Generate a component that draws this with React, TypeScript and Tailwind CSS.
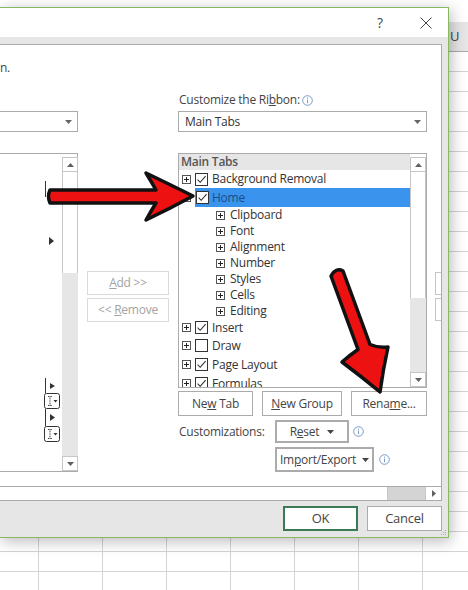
import React from "react";

const SUBS = ["Clipboard", "Font", "Alignment", "Number", "Styles", "Cells", "Editing"];
const COLS = ["w-[39px]", "w-[64px]", "w-[64px]", "w-[64px]", "w-[64px]", "w-[64px]", "w-[64px]", "w-[64px]"];

function Caret({ dir = "down", color = "#666" }: { dir?: "down" | "up" | "right"; color?: string }) {
  if (dir === "right")
    return (
      <svg width="4" height="7" viewBox="0 0 4 7">
        <path d="M0 0L4 3.5L0 7Z" fill={color} />
      </svg>
    );
  return (
    <svg width="7" height="4" viewBox="0 0 7 4">
      <path d={dir === "down" ? "M0 0H7L3.5 4Z" : "M0 4H7L3.5 0Z"} fill={color} />
    </svg>
  );
}

function Info() {
  return (
    <svg width="11" height="11" viewBox="0 0 11 11">
      <circle cx="5.5" cy="5.5" r="4.8" fill="none" stroke="#7b9bc4" strokeWidth="1" />
      <rect x="5" y="4.6" width="1" height="3.6" fill="#7b9bc4" />
      <rect x="5" y="2.6" width="1" height="1.1" fill="#7b9bc4" />
    </svg>
  );
}

function PlusBox({ minus }: { minus?: boolean }) {
  return (
    <svg width="9" height="9" viewBox="0 0 9 9" className="shrink-0">
      <rect x="0.5" y="0.5" width="8" height="8" fill="#fff" stroke="#555" />
      <path d="M2 4.5H7" stroke="#222" />
      {!minus && <path d="M4.5 2V7" stroke="#222" />}
    </svg>
  );
}

function CheckBox({ checked }: { checked: boolean }) {
  return (
    <svg width="13" height="13" viewBox="0 0 13 13" className="shrink-0">
      <rect x="0.5" y="0.5" width="12" height="12" fill="#fff" stroke="#333" />
      {checked && <path d="M2.6 6.6L5.2 9.3L10.6 3.2" fill="none" stroke="#333" strokeWidth="1.1" />}
    </svg>
  );
}

function VScroll({ thumb }: { thumb: string }) {
  return (
    <div className="w-[16px] shrink-0 flex flex-col pt-[3px]">
      <div className="h-[15px] shrink-0 border border-[#c6c6c6] bg-white flex items-center justify-center">
        <Caret dir="up" color="#606060" />
      </div>
      <div className={`${thumb} shrink-0 border-x border-[#c6c6c6] bg-white`} />
      <div className="flex-1 bg-[#e6e6e6]" />
      <div className="h-[15px] shrink-0 border border-[#c6c6c6] bg-white flex items-center justify-center">
        <Caret dir="down" color="#606060" />
      </div>
    </div>
  );
}

function TopRow({ h, label, checked = true }: { h: string; label: string; checked?: boolean }) {
  return (
    <div className={`${h} shrink-0 flex items-center pl-[3px] gap-[4px] whitespace-nowrap text-[#333]`}>
      <PlusBox />
      <CheckBox checked={checked} />
      <span>{label}</span>
    </div>
  );
}

function Sheet() {
  const rows = Array.from({ length: 27 });
  return (
    <div className="w-[468px]">
      <div className="h-[22px]" />
      <div className="h-[30px] flex bg-[#e6e6e6] border-b border-[#ababab]">
        {COLS.map((w, i) => (
          <div key={i} className={`${w} shrink-0 border-r border-[#c8c8c8] flex items-center justify-center text-[13px] text-[#444]`}>
            {i === 7 ? "U" : ""}
          </div>
        ))}
      </div>
      {rows.map((_, r) => (
        <div key={r} className="h-[20px] flex border-b border-[#d4d4d4]">
          {COLS.map((w, i) => (
            <div key={i} className={`${w} shrink-0 border-r border-[#d4d4d4]`} />
          ))}
        </div>
      ))}
    </div>
  );
}

function LeftColumn() {
  return (
    <div className="w-[78px] shrink-0 flex flex-col">
      <div className="h-[19px]" />
      <div className="h-[21px] border-y border-r border-[#ababab] flex items-center justify-end pr-[5px]">
        <Caret />
      </div>
      <div className="mt-[21px] h-[319px] border-y border-r border-[#ababab] flex">
        <div className="flex-1 flex flex-col">
          <div className="mt-[27px] ml-[45px] w-[1px] h-[16px] bg-[#333]" />
          <div className="mt-[40px] ml-[49px] leading-none">
            <svg width="5" height="8" viewBox="0 0 5 8">
              <path d="M0 0L5 4L0 8Z" fill="#333" />
            </svg>
          </div>
          <div className="mt-[132px] ml-[42px] leading-none">
            <svg width="20" height="66" viewBox="0 0 20 66">
              <path d="M3.5 1V16M3.5 32V49" stroke="#333" />
              <path d="M8 6L13 9L8 12Z" fill="#333" />
              <path d="M8 37L13 40.5L8 44Z" fill="#333" />
              {[16, 49].map((y) => (
                <g key={y}>
                  <rect x="2.5" y={y + 0.5} width="15" height="15" rx="2" fill="#fff" stroke="#333" />
                  <path d={`M6 ${y + 3.5}H10M8 ${y + 3.5}V${y + 12.5}M6 ${y + 12.5}H10`} stroke="#444" strokeDasharray="1 0.6" />
                  <path d={`M11.5 ${y + 7}H15.5L13.5 ${y + 9.5}Z`} fill="#333" />
                </g>
              ))}
            </svg>
          </div>
        </div>
        <VScroll thumb="h-[101px]" />
      </div>
    </div>
  );
}

function RightColumn() {
  return (
    <div className="ml-[9px] w-[249px] shrink-0 flex flex-col">
      <div className="h-[16px] flex items-center gap-[2px] pl-[1px] whitespace-nowrap">
        <span>
          Customize the Ri<span className="underline">b</span>bon:
        </span>
        <Info />
      </div>
      <div className="mt-[3px] h-[21px] border border-[#ababab] flex items-center justify-between pl-[6px] pr-[5px] text-[#333]">
        <span>Main Tabs</span>
        <Caret />
      </div>
      <div className="mt-[21px] h-[235px] border border-[#ababab] flex">
        <div className="flex-1 overflow-hidden flex flex-col">
          <div className="h-[16px] shrink-0 bg-[#e6e6e6] pl-[2px] flex items-center font-semibold text-[#555]">
            Main Tabs
          </div>
          <TopRow h="h-[18px]" label="Background Removal" />
          <div className="h-[19px] shrink-0 flex items-center pl-[3px] whitespace-nowrap">
            <PlusBox minus />
            <div className="ml-[4px] flex-1 h-[19px] bg-[#3a94ee] flex items-center gap-[3px] pl-[1px] text-[#1c4d86]">
              <CheckBox checked />
              <span>Home</span>
            </div>
          </div>
          {SUBS.map((s) => (
            <div key={s} className="h-[16px] shrink-0 flex items-center pl-[37px] gap-[5px] text-[#333]">
              <PlusBox />
              <span>{s}</span>
            </div>
          ))}
          <TopRow h="h-[17px]" label="Insert" />
          <TopRow h="h-[19px]" label="Draw" checked={false} />
          <TopRow h="h-[19px]" label="Page Layout" />
          <TopRow h="h-[19px]" label="Formulas" />
        </div>
        <VScroll thumb="h-[126px]" />
      </div>
      <div className="mt-[3px] h-[25px] flex gap-[9px]">
        <button type="button" className="w-[75px] border border-[#ababab] bg-white text-[#444]">
          Ne<span className="underline">w</span> Tab
        </button>
        <button type="button" className="w-[80px] border border-[#ababab] bg-white text-[#444]">
          <span className="underline">N</span>ew Group
        </button>
        <button type="button" className="w-[76px] border border-[#ababab] bg-white text-[#444]">
          Rena<span className="underline">m</span>e...
        </button>
      </div>
      <div className="mt-[4px] h-[23px] flex items-center">
        <span className="w-[97px] shrink-0 pl-[1px]">Customizations:</span>
        <button type="button" className="w-[74px] h-[23px] border-2 border-[#ababab] bg-white text-[#444] flex items-center justify-center gap-[8px]">
          <span>
            R<span className="underline">e</span>set
          </span>
          <Caret color="#444" />
        </button>
        <span className="ml-[4px] flex">
          <Info />
        </span>
      </div>
      <div className="mt-[4px] h-[25px] flex items-center">
        <button type="button" className="ml-[97px] w-[99px] h-[25px] border-2 border-[#ababab] bg-white text-[#444] flex items-center justify-center gap-[6px] whitespace-nowrap">
          <span>
            Im<span className="underline">p</span>ort/Export
          </span>
          <Caret color="#444" />
        </button>
        <span className="ml-[5px] flex">
          <Info />
        </span>
      </div>
    </div>
  );
}

function Dialog() {
  return (
    <div className="absolute left-0 top-[7px] w-[449px] h-[531px] flex flex-col bg-[#e6e6e6] border-t border-r border-b border-[#86b962] shadow-[2px_3px_14px_rgba(0,0,0,0.28)]">
      {/* Title bar */}
      <div className="h-[29px] shrink-0 bg-white flex items-center justify-end pr-[11px]">
        <span className="w-[20px] mr-[25px] text-center text-[14px] text-[#444]">?</span>
        <span className="w-[22px] flex justify-center">
          <svg width="12" height="12" viewBox="0 0 12 12">
            <path d="M0.5 0.5L11.5 11.5M11.5 0.5L0.5 11.5" stroke="#444" strokeWidth="1" />
          </svg>
        </span>
      </div>

      {/* Body */}
      <div className="shrink-0 pt-[7px] pr-[6px]">
        <div className="w-[442px] h-[457px] bg-white border-t border-r border-[#ababab] flex flex-col overflow-hidden">
          <div className="mt-[15px] h-[16px] leading-[16px]">n.</div>
          <div className="mt-[16px] flex items-start">
            <LeftColumn />
            <div className="ml-[9px] w-[82px] shrink-0 flex flex-col mt-[179px] gap-[3px]">
              <button type="button" className="h-[24px] border border-[#dadada] bg-white text-[#a3a3a3]">
                <span className="underline">A</span>dd &gt;&gt;
              </button>
              <button type="button" className="h-[24px] border border-[#dadada] bg-white text-[#a3a3a3]">
                &lt;&lt; <span className="underline">R</span>emove
              </button>
            </div>
            <RightColumn />
            <div className="ml-[8px] w-[20px] shrink-0 flex flex-col mt-[180px] gap-[3px]">
              <div className="h-[23px] border border-[#c6c6c6] bg-white" />
              <div className="h-[23px] border border-[#c6c6c6] bg-white" />
            </div>
          </div>
          {/* horizontal scrollbar */}
          <div className="mt-auto h-[15px] shrink-0 border-y border-[#ababab] flex">
            <div className="w-[388px] shrink-0 bg-white border-r border-[#c6c6c6]" />
            <div className="flex-1 bg-[#d4d4d4]" />
            <div className="w-[16px] shrink-0 bg-white border-l border-[#c6c6c6] flex items-center justify-center">
              <Caret dir="right" color="#606060" />
            </div>
          </div>
        </div>
      </div>

      {/* Footer */}
      <div className="flex-1 flex justify-end gap-[9px] pt-[5px] pr-[6px]">
        <button type="button" className="w-[75px] h-[25px] border-2 border-[#3b7a57] bg-white text-[#444] text-[13px]">
          OK
        </button>
        <button type="button" className="w-[75px] h-[25px] border border-[#ababab] bg-white text-[#444] text-[13px]">
          Cancel
        </button>
      </div>
      <svg width="7" height="7" viewBox="0 0 7 7" className="absolute right-[1px] bottom-[1px]">
        {[
          [5.5, 1.5],
          [5.5, 3.5],
          [3.5, 3.5],
          [5.5, 5.5],
          [3.5, 5.5],
          [1.5, 5.5],
        ].map(([x, y], i) => (
          <rect key={i} x={x - 0.5} y={y - 0.5} width="1" height="1" fill="#aaa" />
        ))}
      </svg>
    </div>
  );
}

function Arrows() {
  return (
    <svg width="468" height="590" viewBox="0 0 468 590" className="absolute left-0 top-0 pointer-events-none">
      <path
        d="M50 190 L156 190 Q151 181 146 173 Q171 185 193 196 Q171 208 146 220 Q151 211 156 203 L50 203 Q47 196.5 50 190 Z"
        fill="#ee1111"
        stroke="#111"
        strokeWidth="3.5"
        strokeLinejoin="round"
      />
      <path
        d="M331 276 L358 349.5 Q350 355 342 362 Q362 377 380 392 Q383 370 388 347 Q378 348 370 344.5 L343 271 Q336 267 331 276 Z"
        fill="#ee1111"
        stroke="#111"
        strokeWidth="3.5"
        strokeLinejoin="round"
      />
    </svg>
  );
}

export default function App() {
  return (
    <div className="relative w-[468px] h-[590px] overflow-hidden bg-white text-[12px] tracking-[-0.25px] text-[#444] font-['Segoe_UI','Open_Sans',sans-serif]">
      <Sheet />
      <Dialog />
      <Arrows />
    </div>
  );
}
